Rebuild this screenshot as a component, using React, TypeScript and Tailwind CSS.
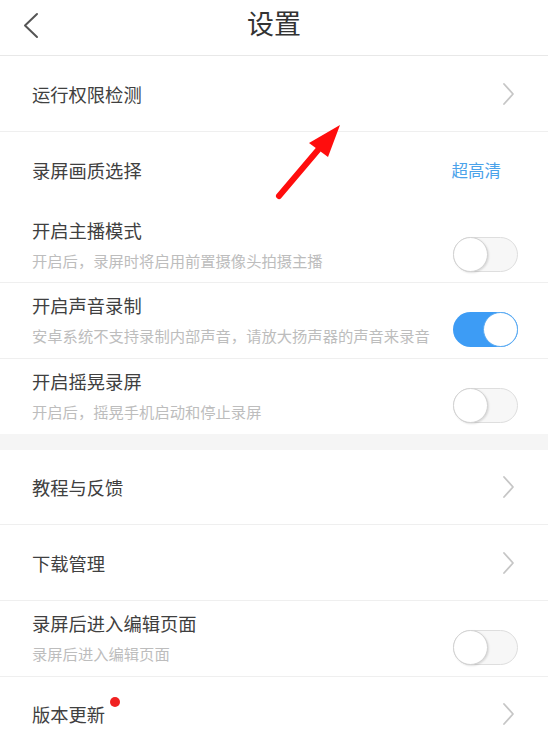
import { ReactNode } from "react";

const font = {
  fontFamily: '"Noto Sans CJK SC", "Noto Sans", sans-serif',
};

function Chevron() {
  return (
    <svg width="14" height="24" viewBox="0 0 14 24" className="shrink-0">
      <polyline
        points="3,2 12,12 3,22"
        fill="none"
        stroke="#c6c6c6"
        strokeWidth="1.8"
        strokeLinecap="round"
        strokeLinejoin="round"
      />
    </svg>
  );
}

function Toggle({ on }: { on?: boolean }) {
  return (
    <div
      className={
        on
          ? "relative w-[65px] h-[35px] rounded-full bg-[#3d9cf5] shrink-0"
          : "relative w-[65px] h-[35px] rounded-full bg-[#f7f7f7] border border-[#dedede] shrink-0"
      }
    >
      <div
        className={
          on
            ? "absolute right-0 top-0 w-[35px] h-[35px] rounded-full bg-white border border-[#5aaaf2]"
            : "absolute left-[-1px] top-[-1px] w-[35px] h-[35px] rounded-full bg-white border border-[#d2d2d2] shadow-[1px_1px_2px_rgba(0,0,0,0.12)]"
        }
      />
    </div>
  );
}

function LinkRow({
  title,
  right,
  border = true,
  h = "h-[76px]",
}: {
  title: ReactNode;
  right?: ReactNode;
  border?: boolean;
  h?: string;
}) {
  return (
    <div
      className={`${h} flex items-center justify-between pl-[32px] pr-[33px] ${
        border ? "border-b border-[#efefef]" : ""
      }`}
    >
      <div className="text-[18.3px] leading-[26px] text-[#404040]">{title}</div>
      {right ?? <Chevron />}
    </div>
  );
}

function SwitchRow({
  title,
  desc,
  on,
  border = true,
  h = "h-[76px]",
}: {
  title: string;
  desc: string;
  on?: boolean;
  border?: boolean;
  h?: string;
}) {
  return (
    <div
      className={`${h} flex justify-between pl-[32px] pr-[30px] ${
        border ? "border-b border-[#efefef]" : ""
      }`}
    >
      <div className="pt-[9px] flex flex-col">
        <span className="text-[18.3px] leading-[26px] text-[#404040]">{title}</span>
        <span className="mt-[7px] text-[15.3px] leading-[20px] text-[#bdbdbd]">{desc}</span>
      </div>
      <div className="pt-[29px]">
        <Toggle on={on} />
      </div>
    </div>
  );
}

export default function App() {
  return (
    <div className="relative w-full min-h-screen bg-white overflow-hidden" style={font}>
      {/* 顶部导航 */}
      <header className="h-[56px] grid grid-cols-[1fr_auto_1fr] items-center border-b border-[#e8e8e8]">
        <div className="pl-[22px] flex items-center -mt-[4px]">
          <svg width="18" height="28" viewBox="0 0 18 28">
            <polyline
              points="15,2 3,13.5 15,25"
              fill="none"
              stroke="#555"
              strokeWidth="2"
              strokeLinecap="round"
              strokeLinejoin="round"
            />
          </svg>
        </div>
        <h1 className="text-[27px] leading-[36px] text-[#333] -mt-[9px]">设置</h1>
        <div />
      </header>

      <LinkRow title="运行权限检测" />
      <LinkRow
        title="录屏画质选择"
        border={false}
        right={<span className="text-[16.5px] text-[#4ba2ea] pr-[14px]">超高清</span>}
      />
      <SwitchRow title="开启主播模式" desc="开启后，录屏时将启用前置摄像头拍摄主播" h="h-[75px]" />
      <SwitchRow title="开启声音录制" desc="安卓系统不支持录制内部声音，请放大扬声器的声音来录音" on />
      <SwitchRow title="开启摇晃录屏" desc="开启后，摇晃手机启动和停止录屏" border={false} h="h-[75px]" />

      <div className="h-[16px] bg-[#f5f5f5]" />

      <LinkRow title="教程与反馈" h="h-[75px]" />
      <LinkRow title="下载管理" />
      <SwitchRow title="录屏后进入编辑页面" desc="录屏后进入编辑页面" />
      <LinkRow
        border={false}
        h="h-[74px]"
        title={
          <span className="relative inline-block">
            版本更新
            <span className="absolute -right-[15px] top-[-4px] w-[10px] h-[10px] rounded-full bg-[#f02222]" />
          </span>
        }
      />

      {/* 标注箭头 */}
      <svg
        className="absolute left-0 top-0 pointer-events-none"
        width="548"
        height="754"
        viewBox="0 0 548 754"
      >
        <line x1="279" y1="196" x2="318" y2="150" stroke="#ff0d0d" strokeWidth="6" strokeLinecap="round" />
        <polygon points="340,125 309,143 328,157" fill="#ff0d0d" />
      </svg>
    </div>
  );
}
